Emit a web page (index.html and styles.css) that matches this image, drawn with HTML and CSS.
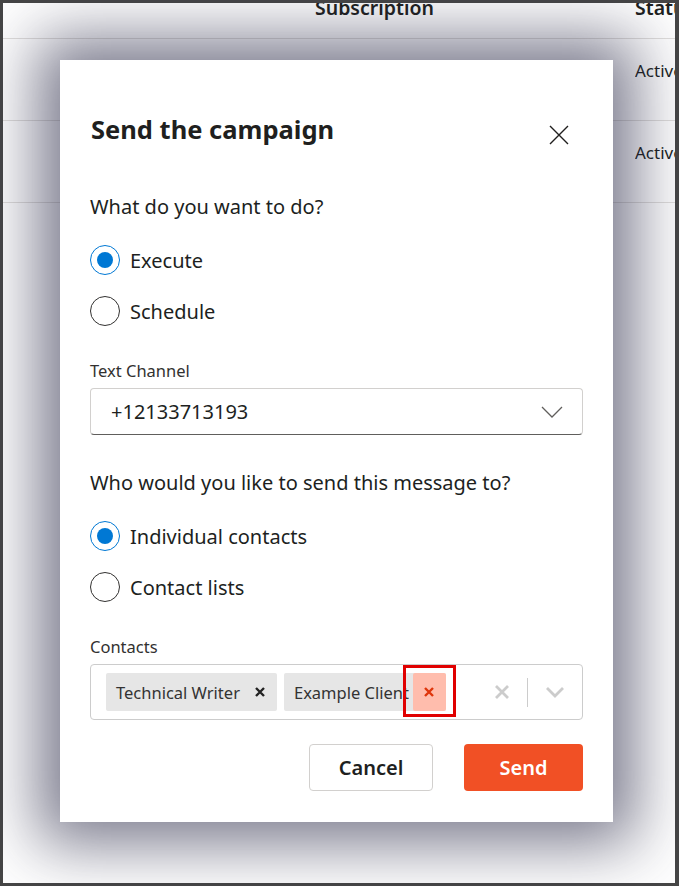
FILE: index.html
```html
<!DOCTYPE html>
<html lang="en">
<head>
<meta charset="utf-8">
<title>Send the campaign</title>
<link rel="stylesheet" href="styles.css">
</head>
<body>
<div class="frame">
  <div class="page">
    <div class="table">
      <div class="row head">
        <div class="cell c1"></div>
        <div class="cell c2"><span class="cut">Subscription</span></div>
        <div class="cell c3"><span class="cut">Status</span></div>
      </div>
      <div class="row">
        <div class="cell c1"></div>
        <div class="cell c2"></div>
        <div class="cell c3">Active</div>
      </div>
      <div class="row">
        <div class="cell c1"></div>
        <div class="cell c2"></div>
        <div class="cell c3">Active</div>
      </div>
    </div>
  </div>

  <div class="modal" role="dialog">
    <div class="modal-head">
      <h1 class="title">Send the campaign</h1>
      <button class="close" aria-label="Close">
        <svg width="20" height="20" viewBox="0 0 20 20"><path d="M1 1 L19 19 M19 1 L1 19" stroke="#201f1e" stroke-width="1.4" fill="none"/></svg>
      </button>
    </div>

    <p class="question q1">What do you want to do?</p>
    <div class="radios">
      <label class="radio"><span class="dot on"></span><span>Execute</span></label>
      <label class="radio"><span class="dot"></span><span>Schedule</span></label>
    </div>

    <div class="field-label l1">Text Channel</div>
    <div class="select">
      <span class="value">+12133713193</span>
      <svg width="22" height="12" viewBox="0 0 22 12"><path d="M1 1 L11 11 L21 1" stroke="#605e5c" stroke-width="1.3" fill="none"/></svg>
    </div>

    <p class="question q2">Who would you like to send this message to?</p>
    <div class="radios">
      <label class="radio"><span class="dot on"></span><span>Individual contacts</span></label>
      <label class="radio"><span class="dot"></span><span>Contact lists</span></label>
    </div>

    <div class="field-label l2">Contacts</div>
    <div class="multi">
      <div class="tags">
        <div class="tag">
          <span class="tag-text">Technical Writer</span>
          <span class="tag-x"><svg width="12" height="12" viewBox="0 0 12 12"><path d="M2 2 L10 10 M10 2 L2 10" stroke="#222" stroke-width="2.4" fill="none"/></svg></span>
        </div>
        <div class="tag">
          <span class="tag-text clip">Example Client</span>
          <span class="tag-x hot"><svg width="12" height="12" viewBox="0 0 12 12"><path d="M2 2 L10 10 M10 2 L2 10" stroke="#de350b" stroke-width="2.4" fill="none"/></svg></span>
          <span class="mark"></span>
        </div>
      </div>
      <div class="indicators">
        <span class="ind clear"><svg width="16" height="16" viewBox="0 0 16 16"><path d="M2 2 L14 14 M14 2 L2 14" stroke="#cccccc" stroke-width="2.8" fill="none"/></svg></span>
        <span class="sep"></span>
        <span class="ind"><svg width="20" height="12" viewBox="0 0 20 12"><path d="M2 2 L10 10 L18 2" stroke="#cccccc" stroke-width="2.8" fill="none"/></svg></span>
      </div>
    </div>

    <div class="actions">
      <button class="btn cancel">Cancel</button>
      <button class="btn send">Send</button>
    </div>
  </div>
</div>
</body>
</html>
```

FILE: styles.css
```css
* { box-sizing: border-box; }
html, body { margin: 0; padding: 0; }
body {
  background: #464646;
  font-family: "Noto Sans", "Open Sans", sans-serif;
  color: #201f1e;
}
.frame {
  width: 679px;
  height: 886px;
  padding: 3px 4px 3px 3px;
  position: relative;
  overflow: hidden;
}
.page {
  background: #ffffff;
  height: 100%;
  overflow: hidden;
}
.table { display: flex; flex-direction: column; }
.row {
  display: flex;
  height: 82px;
  border-bottom: 1px solid #e1dfdd;
}
.row.head { height: 36px; }
.cell { font-size: 18px; }
.c1 { width: 312px; }
.c2 { width: 320px; }
.c3 { flex: 1; padding-top: 20px; white-space: nowrap; overflow: hidden; font-size: 17px; }
.head .cell { padding-top: 0; font-weight: 600; font-size: 19.5px; }
.cut { display: block; margin-top: -9px; white-space: nowrap; }

.modal {
  position: absolute;
  left: 60px;
  top: 60px;
  width: 553px;
  height: 762px;
  background: #ffffff;
  padding: 53px 30px 31px 30px;
  box-shadow: 0 0 60px 22px rgba(40, 40, 70, 0.62);
  display: flex;
  flex-direction: column;
}
.modal-head {
  display: flex;
  justify-content: space-between;
  align-items: flex-start;
  height: 32px;
}
.title {
  margin: 0 0 0 1px;
  font-size: 25.5px;
  font-weight: 700;
  line-height: 32px;
  color: #201f1e;
}
.close {
  border: 0;
  background: none;
  padding: 0;
  margin: 12px 14px 0 0;
  width: 20px;
  height: 20px;
  display: block;
}
.close svg { display: block; }
.question {
  margin: 0;
  font-size: 20px;
  line-height: 28px;
  color: #201f1e;
}
.q1 { margin-top: 48px; }
.q2 { margin-top: 34px; }
.radios {
  display: flex;
  flex-direction: column;
  gap: 21px;
  margin-top: 24px;
}
.radio {
  display: flex;
  align-items: center;
  gap: 10px;
  height: 30px;
  font-size: 20px;
  color: #201f1e;
}
.dot {
  width: 30px;
  height: 30px;
  border-radius: 50%;
  border: 1.5px solid #323130;
  display: flex;
  align-items: center;
  justify-content: center;
  flex: none;
}
.dot.on { border: 1px solid #0078d4; }
.dot.on::after {
  content: "";
  width: 16px;
  height: 16px;
  border-radius: 50%;
  background: #0078d4;
}
.field-label {
  margin-top: 34px;
  font-size: 16.5px;
  line-height: 22px;
  color: #323130;
}
.select {
  margin-top: 6px;
  height: 47px;
  border: 1px solid #d2d0ce;
  border-bottom-color: #605e5c;
  border-radius: 4px;
  display: flex;
  align-items: center;
  justify-content: space-between;
  padding: 0 19px 0 20px;
}
.select .value { font-size: 20px; }
.select svg { display: block; }
.multi {
  margin-top: 6px;
  height: 56px;
  border: 1px solid #cccccc;
  border-radius: 4px;
  display: flex;
  align-items: center;
  justify-content: space-between;
  padding: 0 0 0 15px;
}
.tags { display: flex; gap: 7px; }
.tag {
  position: relative;
  display: flex;
  align-items: stretch;
  height: 38px;
  background: #e6e6e6;
  border-radius: 2px;
}
.tag-text {
  display: flex;
  align-items: center;
  padding-left: 10px;
  padding-right: 4px;
  font-size: 16.5px;
  color: #333333;
  white-space: nowrap;
}
.tag-text.clip { width: 129px; overflow: hidden; padding-right: 0; }
.tag-x {
  width: 33px;
  display: flex;
  align-items: center;
  justify-content: center;
  border-radius: 2px;
}
.tag-x.hot { background: #ffbdad; }
.mark {
  position: absolute;
  left: 119px;
  top: -8px;
  width: 53px;
  height: 52px;
  border: 3px solid #e00000;
}
.indicators {
  display: flex;
  align-items: center;
  height: 100%;
}
.ind {
  width: 38px;
  display: flex;
  justify-content: center;
  align-items: center;
}
.ind.clear { width: 38px; margin-right: 6px; }
.ind svg { display: block; }
.sep {
  width: 1px;
  height: 29px;
  background: #cccccc;
}
.ind:last-child { width: 54px; }
.actions {
  margin-top: auto;
  display: flex;
  justify-content: flex-end;
  gap: 31px;
}
.btn {
  height: 47px;
  border-radius: 4px;
  font-family: inherit;
  font-size: 20px;
  font-weight: 600;
}
.cancel {
  width: 124px;
  background: #ffffff;
  border: 1px solid #d2d0ce;
  color: #201f1e;
}
.send {
  width: 119px;
  background: #f15025;
  border: 0;
  color: #ffffff;
}
```
